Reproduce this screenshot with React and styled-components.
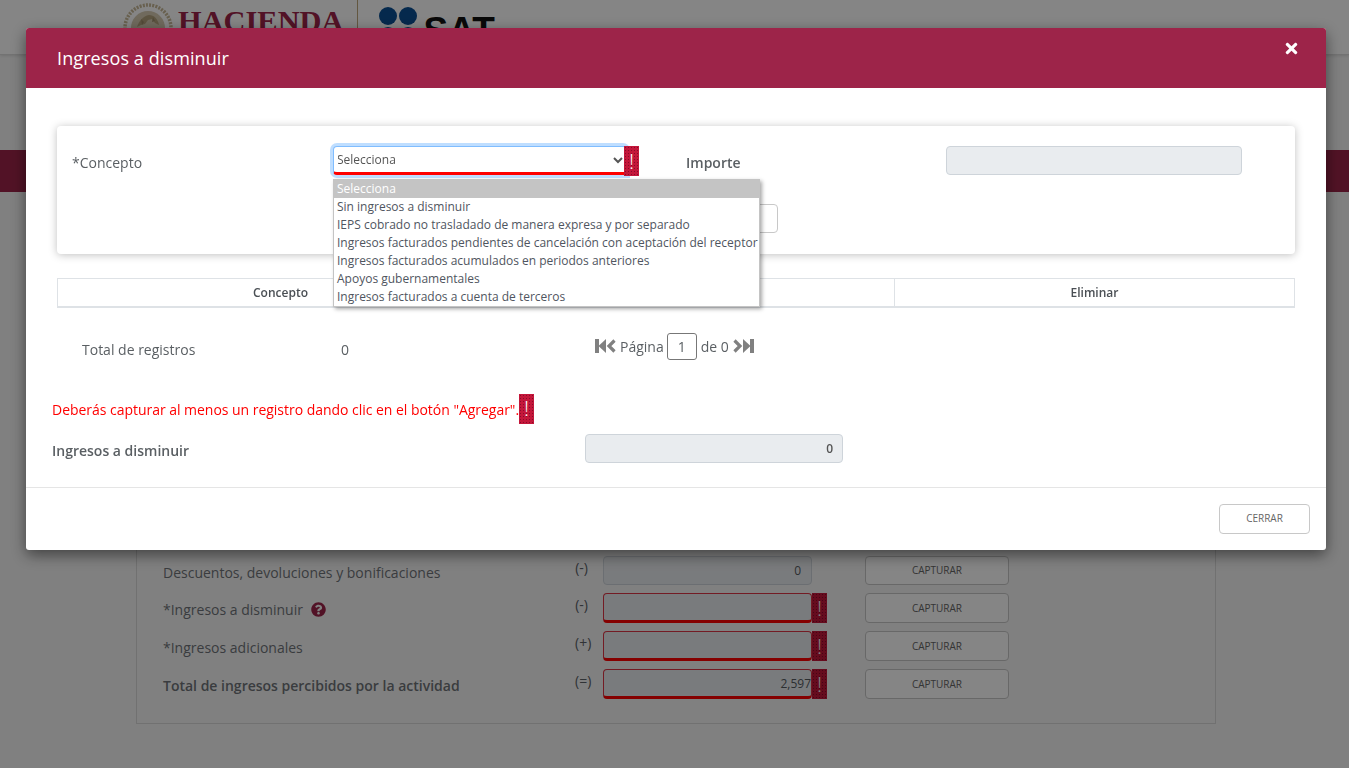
import React from "react";
import styled, { createGlobalStyle } from "styled-components";
import { FaTimes, FaQuestionCircle } from "react-icons/fa";

const opciones = [
  "Selecciona",
  "Sin ingresos a disminuir",
  "IEPS cobrado no trasladado de manera expresa y por separado",
  "Ingresos facturados pendientes de cancelación con aceptación del receptor",
  "Ingresos facturados acumulados en periodos anteriores",
  "Apoyos gubernamentales",
  "Ingresos facturados a cuenta de terceros",
];

const filas = [
  { label: "Descuentos, devoluciones y bonificaciones", signo: "(-)", valor: "0" },
  { label: "*Ingresos a disminuir", signo: "(-)", valor: "", ayuda: true, error: true },
  { label: "*Ingresos adicionales", signo: "(+)", valor: "", error: true },
  { label: "Total de ingresos percibidos por la actividad", signo: "(=)", valor: "2,597", error: true, bold: true },
];

export default function App() {
  return (
    <>
      <GlobalStyle />
      <Page>
        <TopBar>
          <Seal />
          <HaciendaText>HACIENDA</HaciendaText>
          <LogoDivider />
          <SatDots />
          <SatText>SAT</SatText>
        </TopBar>
        <Band />
        <Panel>
          <RowsGrid>
            {filas.map((fila) => (
              <React.Fragment key={fila.label}>
                <RowLabel $bold={fila.bold}>
                  {fila.label}
                  {fila.ayuda && <HelpIcon />}
                </RowLabel>
                <Sign>{fila.signo}</Sign>
                <AmountInput readOnly value={fila.valor} $error={fila.error} />
                {fila.error ? <ErrorBadge>!</ErrorBadge> : <span />}
                <GhostButton>CAPTURAR</GhostButton>
              </React.Fragment>
            ))}
          </RowsGrid>
        </Panel>
      </Page>

      <Backdrop />

      <Modal>
        <ModalHeader>
          <ModalTitle>Ingresos a disminuir</ModalTitle>
          <CloseButton aria-label="Cerrar">
            <FaTimes />
          </CloseButton>
        </ModalHeader>

        <ModalBody>
          <Card>
            <CardLabel>*Concepto</CardLabel>
            <SelectWrap>
              <ConceptSelect defaultValue="Selecciona">
                {opciones.map((o) => (
                  <option key={o}>{o}</option>
                ))}
              </ConceptSelect>
              <ErrorBadge>!</ErrorBadge>
              <OptionList>
                {opciones.map((o, i) => (
                  <OptionItem key={o} $selected={i === 0}>
                    {o}
                  </OptionItem>
                ))}
              </OptionList>
            </SelectWrap>
            <CardLabel $bold>Importe</CardLabel>
            <DisabledInput readOnly value="" />
            <AddCell>
              <AddButton>AGREGAR</AddButton>
            </AddCell>
          </Card>

          <GridTable>
            <thead>
              <tr>
                <GridHead $w={446}>Concepto</GridHead>
                <GridHead $w={391}>Importe</GridHead>
                <GridHead $w={400}>Eliminar</GridHead>
              </tr>
            </thead>
          </GridTable>

          <TotalsRow>
            <TotalsLabel>Total de registros</TotalsLabel>
            <TotalsCount>0</TotalsCount>
            <Pager>
              <PagerIcons>
                <StepIcon />
                <ChevronIcon />
              </PagerIcons>
              <span>Página</span>
              <PageBox>1</PageBox>
              <span>de 0</span>
              <PagerIcons $flip>
                <StepIcon />
                <ChevronIcon />
              </PagerIcons>
            </Pager>
          </TotalsRow>

          <ErrorMessage>
            <ErrorText>
              Deberás capturar al menos un registro dando clic en el botón "Agregar".
            </ErrorText>
            <ErrorBadge>!</ErrorBadge>
          </ErrorMessage>

          <ResultRow>
            <ResultLabel>Ingresos a disminuir</ResultLabel>
            <ResultInput readOnly value="0" />
          </ResultRow>
        </ModalBody>

        <ModalFooter>
          <FooterButton>CERRAR</FooterButton>
        </ModalFooter>
      </Modal>
    </>
  );
}

function Seal() {
  return (
    <SealSvg viewBox="0 0 50 50">
      <circle cx="25" cy="25" r="23" fill="none" stroke="#c8b998" strokeWidth="3.5" strokeDasharray="2 1.2" />
      <circle cx="25" cy="25" r="17" fill="#d6cbb2" />
      <path d="M14 24c2-6 6-11 12-12 5 0 9 4 10 10l-4-2-3-4-4 1-3 4-4 1z" fill="#b3a27e" />
      <path d="M18 16l3 3-2 3zM30 14l2 4-3 1z" fill="#9c8c6b" />
    </SealSvg>
  );
}

function SatDots() {
  return (
    <DotsSvg viewBox="0 0 38 38">
      <circle cx="9" cy="9" r="9" fill="#0a4f94" />
      <circle cx="29" cy="9" r="9" fill="#0a4f94" />
      <circle cx="9" cy="29" r="9" fill="#0a4f94" />
      <circle cx="29" cy="29" r="9" fill="#0a4f94" />
    </DotsSvg>
  );
}

function StepIcon() {
  return (
    <svg width="11" height="14" viewBox="0 0 11 14">
      <rect x="0" y="0" width="4" height="14" fill="currentColor" />
      <polygon points="11,0 11,14 3.5,7" fill="currentColor" />
    </svg>
  );
}

function ChevronIcon() {
  return (
    <svg width="11" height="14" viewBox="0 0 11 14">
      <polyline points="8.5,1.5 3,7 8.5,12.5" fill="none" stroke="currentColor" strokeWidth="3.2" />
    </svg>
  );
}

const GlobalStyle = createGlobalStyle`
  html, body {
    margin: 0;
    padding: 0;
    background: #f6f6f6;
    font-family: "Open Sans", "Liberation Sans", sans-serif;
    overflow: hidden;
  }
  * {
    box-sizing: border-box;
  }
`;

const Page = styled.div`
  width: 1349px;
  height: 768px;
  background: #f6f6f6;
`;

const TopBar = styled.header`
  display: flex;
  align-items: flex-start;
  height: 55px;
  padding-left: 123px;
  background: #fff;
  border-bottom: 1px solid #ddd;
  box-shadow: 0 1px 3px rgba(0, 0, 0, 0.12);
  overflow: hidden;
`;

const SealSvg = styled.svg`
  width: 50px;
  height: 50px;
  margin-top: 3px;
  flex: none;
`;

const HaciendaText = styled.span`
  margin: 3px 0 0 5px;
  font-family: "Liberation Serif", serif;
  font-size: 30.4px;
  font-weight: 700;
  line-height: 36px;
  color: #9d2449;
`;

const LogoDivider = styled.span`
  width: 1px;
  height: 50px;
  margin-left: 14px;
  background: #bfa77c;
`;

const DotsSvg = styled.svg`
  width: 38px;
  height: 38px;
  margin: 7px 0 0 21px;
  flex: none;
`;

const SatText = styled.span`
  margin: 12px 0 0 6px;
  font-family: "Liberation Sans", sans-serif;
  font-weight: 700;
  font-size: 37px;
  line-height: 38px;
  color: #111;
`;

const Band = styled.div`
  height: 42px;
  margin-top: 95px;
  background: #9d2449;
`;

const Panel = styled.section`
  width: 1080px;
  margin: 28px 0 0 136px;
  padding: 335px 0 24px 26px;
  border: 1px solid #d9d9d9;
`;

const RowsGrid = styled.div`
  display: grid;
  grid-template-columns: 412px 28px 209px 15px 182px;
  grid-template-rows: 29px 30px 30px 30px;
  row-gap: 8px;
`;

const RowLabel = styled.div`
  display: flex;
  align-items: center;
  padding-top: 3px;
  font-size: 14px;
  white-space: nowrap;
  font-weight: ${(p) => (p.$bold ? 600 : 400)};
  color: #6f7479;
`;

const HelpIcon = styled(FaQuestionCircle)`
  margin-left: 8px;
  font-size: 15px;
  color: #9d2449;
`;

const Sign = styled.div`
  padding-right: 15px;
  text-align: right;
  font-size: 14px;
  line-height: 23px;
  color: #5c6268;
`;

const AmountInput = styled.input`
  width: 100%;
  height: 100%;
  padding: 0 ${(p) => (p.$error ? "0" : "10px")} 0 0;
  border: 1px solid ${(p) => (p.$error ? "#dc3545" : "#ced4da")};
  border-bottom: ${(p) => (p.$error ? "3px solid #ff0000" : "1px solid #ced4da")};
  border-radius: 4px;
  background: #e9ecef;
  font-family: inherit;
  font-size: 12px;
  text-align: right;
  color: #555b61;
  outline: none;
`;

const ErrorBadge = styled.span`
  position: relative;
  display: inline-flex;
  align-items: center;
  justify-content: center;
  flex: none;
  width: 15px;
  height: 30px;
  background-color: #c4173a;
  background-image: radial-gradient(rgba(90, 0, 30, 0.55) 0.6px, transparent 0.8px);
  background-size: 3px 3px;
  font-size: 21px;
  font-weight: 300;
  line-height: 1;
  color: #fff;
`;

const GhostButton = styled.button`
  justify-self: end;
  width: 144px;
  height: 100%;
  padding: 0 0 1px;
  border: 1px solid #c8c8c8;
  border-radius: 4px;
  background: #fff;
  font-family: inherit;
  font-size: 10px;
  color: #666;
`;

const Backdrop = styled.div`
  position: fixed;
  inset: 0;
  background: rgba(0, 0, 0, 0.48);
`;

const Modal = styled.div`
  position: fixed;
  top: 28px;
  left: 26px;
  width: 1300px;
  background: #fff;
  border-radius: 3px;
  box-shadow: 0 5px 15px rgba(0, 0, 0, 0.5);
  color: #5a5f63;
`;

const ModalHeader = styled.div`
  display: flex;
  align-items: center;
  justify-content: space-between;
  height: 60px;
  padding: 0 26px 0 31px;
  background: #9d2449;
  border-radius: 3px 3px 0 0;
`;

const ModalTitle = styled.h4`
  margin: 0;
  font-size: 18px;
  font-weight: 400;
  letter-spacing: 0.1px;
  line-height: 60px;
  color: #fff;
`;

const CloseButton = styled.button`
  display: flex;
  align-self: flex-start;
  margin-top: 12px;
  padding: 0;
  border: 0;
  background: none;
  font-size: 17px;
  color: #fff;
`;

const ModalBody = styled.div`
  padding: 38px 31px 24px 26px;
`;

const Card = styled.div`
  display: grid;
  grid-template-columns: 261px 353px 260px 296px;
  grid-template-rows: 30px 29px;
  row-gap: 28px;
  margin-left: 5px;
  padding: 20px 15px 21px;
  background: #fff;
  border-radius: 4px;
  box-shadow: 0 1px 8px rgba(0, 0, 0, 0.25);
`;

const CardLabel = styled.div`
  padding-top: 7px;
  font-size: 14px;
  font-weight: ${(p) => (p.$bold ? 600 : 400)};
`;

const SelectWrap = styled.div`
  position: relative;
  display: flex;
  align-items: flex-start;
`;

const ConceptSelect = styled.select`
  width: 294px;
  height: 29px;
  margin-right: -3px;
  padding: 0;
  text-indent: -1px;
  border: 1px solid #80bdff;
  border-bottom: 3px solid #ff0000;
  border-radius: 4px 4px 0 4px;
  background: #fff;
  box-shadow: 0 0 0 3px rgba(0, 123, 255, 0.25);
  font-family: inherit;
  font-size: 12px;
  color: #555;
  outline: none;
`;

const OptionList = styled.ul`
  position: absolute;
  top: 33px;
  left: 0;
  z-index: 2;
  width: 427px;
  margin: 0;
  padding: 0;
  list-style: none;
  background: #fff;
  border: 1px solid #c4c4c4;
  box-shadow: 2px 2px 4px rgba(0, 0, 0, 0.35);
`;

const OptionItem = styled.li`
  height: 18px;
  padding-left: 3px;
  font-size: 12px;
  line-height: 18px;
  white-space: nowrap;
  background: ${(p) => (p.$selected ? "#c4c4c4" : "#fff")};
  color: ${(p) => (p.$selected ? "#fff" : "#4f5560")};
`;

const DisabledInput = styled.input`
  width: 296px;
  height: 29px;
  border: 1px solid #ced4da;
  border-radius: 4px;
  background: #e9ecef;
  outline: none;
`;

const AddCell = styled.div`
  grid-column: 1 / -1;
  display: flex;
  padding-left: 618px;
`;

const AddButton = styled.button`
  width: 88px;
  height: 29px;
  border: 1px solid #c8c8c8;
  border-radius: 4px;
  background: #fff;
  font-family: inherit;
  font-size: 10px;
  color: #666;
`;

const GridTable = styled.table`
  width: 1237px;
  margin: 24px 0 0 5px;
  border-collapse: collapse;
  table-layout: fixed;
`;

const GridHead = styled.th`
  width: ${(p) => p.$w}px;
  height: 28px;
  padding: 0;
  border: 1px solid #dee2e6;
  border-bottom: 2px solid #dee2e6;
  font-size: 12px;
  font-weight: 600;
  color: #4a4f54;
`;

const TotalsRow = styled.div`
  display: flex;
  margin: 25px 0 0 5px;
  padding-left: 25px;
  height: 27px;
  font-size: 14px;
`;

const TotalsLabel = styled.span`
  width: 259px;
  padding-top: 7px;
  line-height: 20px;
`;

const TotalsCount = styled.span`
  width: 254px;
  padding-top: 7px;
  line-height: 20px;
`;

const Pager = styled.div`
  display: flex;
  align-items: center;
  gap: 3px;
`;

const PagerIcons = styled.span`
  display: inline-flex;
  align-items: center;
  color: #808080;
  transform: ${(p) => (p.$flip ? "scaleX(-1)" : "none")};
`;

const PageBox = styled.span`
  width: 30px;
  height: 27px;
  margin-right: 1px;
  border: 1px solid #777;
  border-radius: 3px;
  text-align: center;
  line-height: 25px;
`;

const ErrorMessage = styled.div`
  display: flex;
  align-items: center;
  height: 30px;
  margin-top: 34px;
`;

const ErrorText = styled.span`
  padding-top: 2px;
  font-size: 14px;
  letter-spacing: -0.03px;
  color: #ff0000;
`;

const ResultRow = styled.div`
  display: flex;
  align-items: center;
  margin-top: 10px;
`;

const ResultLabel = styled.div`
  width: 533px;
  padding-top: 4px;
  font-size: 14px;
  font-weight: 600;
`;

const ResultInput = styled.input`
  width: 258px;
  height: 29px;
  padding-right: 9px;
  border: 1px solid #ced4da;
  border-radius: 4px;
  background: #e9ecef;
  font-family: inherit;
  font-size: 12px;
  font-weight: 600;
  text-align: right;
  color: #555;
  outline: none;
`;

const ModalFooter = styled.div`
  display: flex;
  justify-content: flex-end;
  padding: 16px;
  border-top: 1px solid #e5e5e5;
`;

const FooterButton = styled.button`
  width: 91px;
  height: 30px;
  padding: 0 0 1px;
  border: 1px solid #c8c8c8;
  border-radius: 4px;
  background: #fff;
  font-family: inherit;
  font-size: 10px;
  color: #666;
`;
